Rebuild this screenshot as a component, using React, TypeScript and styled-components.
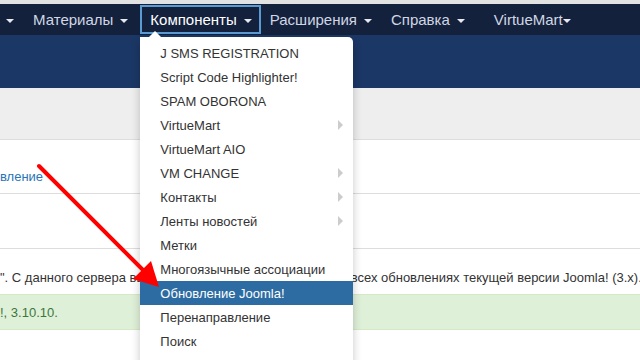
import React from "react";
import styled, { createGlobalStyle } from "styled-components";

const GlobalStyle = createGlobalStyle`
  html, body {
    margin: 0;
    padding: 0;
    background: #fff;
    overflow: hidden;
  }
  body {
    font-family: "Liberation Sans", Arial, sans-serif;
    color: #333;
  }
`;

const Page = styled.div`
  position: relative;
  width: 640px;
  height: 360px;
  overflow: hidden;
`;

const TopStrip = styled.div`
  height: 4px;
  background: #e2e2e2;
`;

const Navbar = styled.nav`
  display: flex;
  align-items: stretch;
  height: 31px;
  background: #14213d;
`;

const NavItem = styled.div<{ $active?: boolean; $gap?: number; $padLeft?: number }>`
  position: relative;
  display: flex;
  align-items: center;
  gap: 7px;
  margin: 1px 0 1px ${(p) => p.$gap ?? 0}px;
  padding: 0 7px 0 ${(p) => p.$padLeft ?? 8}px;
  font-size: 15px;
  color: ${(p) => (p.$active ? "#fff" : "#d0d7e3")};
  box-sizing: border-box;
  border: 2px solid ${(p) => (p.$active ? "#5b9ad3" : "transparent")};
  white-space: nowrap;
`;

const Caret = styled.span<{ $tight?: boolean }>`
  display: inline-block;
  width: 0;
  height: 0;
  margin-left: ${(p) => (p.$tight ? -7 : 0)}px;
  border-left: 4px solid transparent;
  border-right: 4px solid transparent;
  border-top: 4px solid #e6e9ef;
  margin-top: 2px;
`;

const Band = styled.div`
  height: 53px;
  background: #1b3765;
`;

const Toolbar = styled.div`
  height: 51px;
  background: #eeeeee;
  border-bottom: 1px solid #dddddd;
`;

const Row = styled.div<{ $h: number }>`
  height: ${(p) => p.$h}px;
  border-bottom: 1px solid #dddddd;
  display: flex;
  align-items: flex-end;
  padding-bottom: 9px;
  box-sizing: border-box;
  font-size: 13px;
`;

const Link = styled.a`
  color: #2a74b8;
  text-decoration: none;
`;

const Paragraph = styled.p`
  margin: 0;
  height: 45px;
  padding-top: 21px;
  box-sizing: border-box;
  font-size: 13px;
  line-height: 16px;
  white-space: nowrap;
`;

const Alert = styled.div`
  height: 36px;
  box-sizing: border-box;
  background: #dff0d8;
  border-top: 1px solid #d6e9c6;
  border-bottom: 1px solid #d6e9c6;
  color: #3c763d;
  font-size: 13px;
  display: flex;
  align-items: center;
`;

const Dropdown = styled.ul`
  position: absolute;
  top: 30px;
  left: -2px;
  width: 213px;
  margin: 0;
  padding: 4px 0;
  list-style: none;
  background: #fff;
  border-radius: 0 5px 5px 5px;
  box-shadow: 0 5px 10px rgba(0, 0, 0, 0.22);
  z-index: 10;

  &::before {
    content: "";
    position: absolute;
    top: -6px;
    left: 9px;
    border-left: 6px solid transparent;
    border-right: 6px solid transparent;
    border-bottom: 6px solid #fff;
  }
`;

const MenuItem = styled.li<{ $active?: boolean }>`
  display: flex;
  align-items: center;
  justify-content: space-between;
  height: 24px;
  padding: 0 10px 0 20px;
  font-size: 13px;
  color: ${(p) => (p.$active ? "#fff" : "#333")};
  background: ${(p) => (p.$active ? "#2d6ca2" : "transparent")};
`;

const SubArrow = styled.span`
  width: 0;
  height: 0;
  border-top: 5px solid transparent;
  border-bottom: 5px solid transparent;
  border-left: 5px solid #cccccc;
`;

const Annotation = styled.svg`
  position: absolute;
  left: 0;
  top: 0;
  pointer-events: none;
  z-index: 20;
`;

const menu = [
  { label: "J SMS REGISTRATION" },
  { label: "Script Code Highlighter!" },
  { label: "SPAM OBORONA" },
  { label: "VirtueMart", sub: true },
  { label: "VirtueMart AIO" },
  { label: "VM CHANGE", sub: true },
  { label: "Контакты", sub: true },
  { label: "Ленты новостей", sub: true },
  { label: "Метки" },
  { label: "Многоязычные ассоциации" },
  { label: "Обновление Joomla!", active: true },
  { label: "Перенаправление" },
  { label: "Поиск" },
  { label: "Пользовательские поля" },
];

export default function App() {
  return (
    <Page>
      <GlobalStyle />
      <TopStrip />
      <Navbar>
        <NavItem $padLeft={4}>
          <Caret />
        </NavItem>
        <NavItem $gap={0}>
          Материалы <Caret />
        </NavItem>
        <NavItem $active $gap={3}>
          Компоненты <Caret />
          <Dropdown>
            {menu.map((m) => (
              <MenuItem key={m.label} $active={m.active}>
                {m.label}
                {m.sub && <SubArrow />}
              </MenuItem>
            ))}
          </Dropdown>
        </NavItem>
        <NavItem $gap={-1}>
          Расширения <Caret />
        </NavItem>
        <NavItem $gap={0}>
          Справка <Caret />
        </NavItem>
        <NavItem $gap={10}>
          VirtueMart <Caret $tight />
        </NavItem>
      </Navbar>
      <Band />
      <Toolbar />
      <Row $h={54}>
        <Link href="#">вление</Link>
      </Row>
      <Row $h={55} />
      <Paragraph>
        ". С данного сервера вы можете получить информацию о всех обновлениях текущей версии Joomla! (3.x).
      </Paragraph>
      <Alert>!, 3.10.10.</Alert>
      <Annotation width="640" height="360" viewBox="0 0 640 360">
        <line x1="39" y1="166" x2="146" y2="273" stroke="#ff0000" strokeWidth="4" strokeLinecap="round" />
        <polygon points="159,287 133,279 151,261" fill="#ff0000" />
      </Annotation>
    </Page>
  );
}
